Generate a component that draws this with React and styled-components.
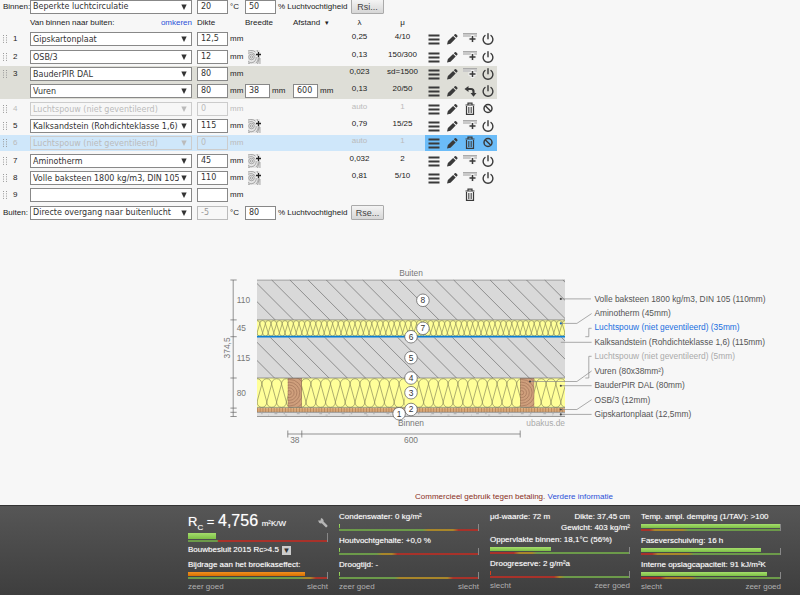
import React, { useState } from 'react';
import styled, { createGlobalStyle } from 'styled-components';

const layers = [
  { id: 1, nr: '1', material: 'Gipskartonplaat', dikte: '12,5', lambda: '0,25', mu: '4/10', actions: ['add', 'power'] },
  { id: 2, nr: '2', material: 'OSB/3', dikte: '12', wood: true, lambda: '0,13', mu: '150/300', actions: ['add', 'power'] },
  { id: 3, nr: '3', material: 'BauderPIR DAL', dikte: '80', lambda: '0,023', mu: 'sd=1500', actions: ['add', 'power'], tone: 'group', joined: true },
  { id: 4, nr: '', material: 'Vuren', dikte: '80', breedte: '38', afstand: '600', lambda: '0,13', mu: '20/50', actions: ['back', 'power'], tone: 'group' },
  { id: 5, nr: '4', material: 'Luchtspouw (niet geventileerd)', dikte: '0', lambda: 'auto', mu: '1', actions: ['trash', 'ban'], off: true },
  { id: 6, nr: '5', material: 'Kalksandstein (Rohdichteklasse 1,6)', dikte: '115', wood: true, lambda: '0,79', mu: '15/25', actions: ['add', 'power'] },
  { id: 7, nr: '6', material: 'Luchtspouw (niet geventileerd)', dikte: '0', lambda: 'auto', mu: '1', actions: ['trash', 'ban'], off: true, tone: 'active' },
  { id: 8, nr: '7', material: 'Aminotherm', dikte: '45', wood: true, lambda: '0,032', mu: '2', actions: ['add', 'power'] },
  { id: 9, nr: '8', material: 'Volle baksteen 1800 kg/m3, DIN 105', dikte: '110', wood: true, lambda: '0,81', mu: '5/10', actions: ['add', 'power'] },
  { id: 10, nr: '9', material: '', dikte: '', lambda: '', mu: '', actions: ['trash'], empty: true },
];

const tones = { group: '#deded7', active: '#cfe7fa' };

const icons = {
  menu: <path d="M1.500 3.500h11M1.500 7.500h11M1.500 11.500h11" stroke="#3a3a3a" strokeWidth="1.800" />,
  edit: (
    <g fill="#3a3a3a">
      <path d="M2 12.500l.9-3.500 5.200-5 2.600 2.600-5.200 5.100z" />
      <path d="M8.800 3.300l1-1q.7-.6 1.300 0l1.200 1.200q.6.700 0 1.300l-1 1z" />
    </g>
  ),
  add: (
    <g>
      <path d="M0 1h14v4H0z" fill="#c9c9c9" />
      <path d="M0 1.500h14" stroke="#aaa" />
      <path d="M9.500 3v8M5.500 7h8" stroke="#f2f2f2" strokeWidth="3.600" />
      <path d="M9.500 4v6M6.500 7h6" stroke="#3a3a3a" strokeWidth="1.500" />
    </g>
  ),
  power: (
    <g fill="none" stroke="#3a3a3a" strokeWidth="1.400" strokeLinecap="round">
      <path d="M4 3.500A4.900 4.900 0 1 0 10 3.500" />
      <path d="M7 1.800v5" />
    </g>
  ),
  back: (
    <g>
      <path d="M4.500 5h3.500q2.500 0 2.500 2.500v2" fill="none" stroke="#3a3a3a" strokeWidth="2.200" />
      <path d="M5.500 2v6L1.500 5zM7.500 9h6l-3 3.800z" fill="#3a3a3a" />
    </g>
  ),
  trash: (
    <g fill="none" stroke="#3a3a3a">
      <path d="M2.500 3h9M5 2.500v-1.300h4v1.300" strokeWidth="1.200" />
      <path d="M3.500 4v8.300h7V4" strokeWidth="1.200" />
      <path d="M5.500 5v6M7 5v6M8.500 5v6" strokeWidth=".7" />
    </g>
  ),
  ban: (
    <g fill="none" stroke="#3a3a3a" strokeWidth="1.500">
      <circle cx="7" cy="6.500" r="4" />
      <path d="M4.200 3.700l5.600 5.600" />
    </g>
  ),
};

const iconLabels = {
  menu: 'Verplaatsen', edit: 'Bewerken', add: 'Laag toevoegen', power: 'Uitschakelen',
  back: 'Terug', trash: 'Verwijderen', ban: 'Inschakelen',
};

function Icon({ name }) {
  return (
    <IconButton type="button" aria-label={iconLabels[name]}>
      <svg width="14" height="14" viewBox="0 0 14 14" aria-hidden="true">{icons[name]}</svg>
    </IconButton>
  );
}

function WoodButton() {
  return (
    <IconButton type="button" aria-label="Hout toevoegen">
      <svg width="14" height="14" viewBox="0 0 14 14" aria-hidden="true">
        <path d="M1 0h12v14H1z" fill="#e6e6e6" />
        <g fill="none" stroke="#8c8c8c" strokeWidth=".7">
          <circle cx="4.500" cy="7" r="1.200" />
          <circle cx="4.500" cy="7" r="2.800" />
          <path d="M1 3.200Q5 1 8 4.500T7 12Q4 14 1 11.500M1 1Q7-1 10 4t-1 9M10 0q3 5 2 9l-1.500 5M13 8v6M1 13l2 1" />
        </g>
        <path d="M8.500 2h5.500v5h-5.500z" fill="#f2f2f2" />
        <path d="M11.500 2v5M9 4.500h5" stroke="#222" strokeWidth="1.300" />
      </svg>
    </IconButton>
  );
}

function Dropdown({ value, label, disabled }) {
  return (
    <SelectWrap $off={disabled}>
      <Select aria-label={label} disabled={disabled} defaultValue={value}>
        <option>{value}</option>
      </Select>
      <svg width="6" height="6" viewBox="0 0 6 6" aria-hidden="true"><path d="M.3.500h5.400L3 6z" fill="currentColor" /></svg>
    </SelectWrap>
  );
}

function Climate({ name, surface, temp, hum, button, locked }) {
  return (
    <ClimateRow>
      <ClimateName>{name}</ClimateName>
      <Dropdown value={surface} label={name} />
      <Thickness>
        <Field aria-label={'Temperatuur ' + name} defaultValue={temp} disabled={locked} /> °C
      </Thickness>
      <Humidity>
        <Field defaultValue={hum} />% Luchtvochtigheid
      </Humidity>
      <SurfaceButton type="button">{button}</SurfaceButton>
    </ClimateRow>
  );
}

function LayerRow({ layer }) {
  const { nr, material, dikte, breedte, afstand, wood, lambda, mu, actions, off, empty, tone, joined } = layer;
  return (
    <Row $tone={tones[tone]} $joined={joined} $off={off}>
      <td>
        {nr && (
          <Handle viewBox="0 0 4 8" width="4" height="8" aria-hidden="true">
            <path d="M.5 0v8M3.500 0v8" stroke="#999" strokeDasharray="1 1.300" />
          </Handle>
        )}
      </td>
      <td>{nr}</td>
      <td><Dropdown value={material} label={'Materiaal ' + nr} disabled={off} /></td>
      <td>
        <Thickness><Field aria-label={'Dikte ' + nr} defaultValue={dikte} disabled={off} /> mm</Thickness>
      </td>
      <td>
        {breedte && <Thickness $small><Field aria-label="Breedte" defaultValue={breedte} /> mm</Thickness>}
        {wood && <WoodButton />}
      </td>
      <td>{afstand && <Thickness $small><Field aria-label="Afstand" defaultValue={afstand} /> mm</Thickness>}</td>
      <ValueCell>{lambda}</ValueCell>
      <ValueCell>{mu}</ValueCell>
      <ActionCell $active={tone === 'active'}>
        <Actions>
          {empty ? <><span /><span /></> : <><Icon name="menu" /><Icon name="edit" /></>}
          {actions.map((name) => <Icon key={name} name={name} />)}
        </Actions>
      </ActionCell>
    </Row>
  );
}

// continuous insulation curve between two heights
const insulation = (x1, x2, top, bottom, period) => {
  const r = period / 2;
  const ry = period * 0.55;
  let d = `M${x1 - period} ${bottom - ry}`;
  for (let x = x1 - period; x < x2 + period; x += period) {
    d += `A${r} ${ry} 0 0 0 ${x + period} ${bottom - ry}L${x + r} ${top + ry}A${r} ${ry} 0 0 1 ${x + r + period} ${top + ry}L${x + period} ${bottom - ry}`;
  }
  return d;
};

const hatch = (start, top, height) => {
  let d = '';
  for (let x = start - 78; x < 490; x += 26) d += `M${x} ${top}l${height} ${height}`;
  return d;
};

const markers = [
  [8, 287, 49], [7, 287, 89], [6, 270, 101], [5, 270, 131],
  [4, 270, 160], [3, 270, 181], [2, 270, 205], [1, 253, 211],
];

const legend = [
  { text: 'Volle baksteen 1800 kg/m3, DIN 105 (110mm)', line: 'M484 47H527', dot: [484, 47] },
  { text: 'Aminotherm (45mm)', line: 'M484 82H507L528 68', dot: [484, 82], dotFill: '#1565c0' },
  { text: 'Luchtspouw (niet geventileerd) (35mm)', line: 'M519 101H524V89H528', fill: '#1a6fe0' },
  { text: 'Kalksandstein (Rohdichteklasse 1,6) (115mm)', line: 'M484 109H528' },
  { text: 'Luchtspouw (niet geventileerd) (5mm)', line: 'M519 160H524V129H528', fill: '#aaa' },
  { text: 'Vuren (80x38mm²)', line: 'M440 165H507L528 150', dot: [440, 165] },
  { text: 'BauderPIR DAL (80mm)', line: 'M484 171H528', dot: [484, 171] },
  { text: 'OSB/3 (12mm)', line: 'M484 205H507L528 191', dot: [484, 205] },
  { text: 'Gipskartonplaat (12,5mm)', line: 'M484 212H528', dot: [484, 212] },
];

function Post({ x }) {
  return (
    <svg x={x} y="160" width="20" height="42" viewBox="0 0 20 42">
      <rect width="20" height="42" fill="#cf9f7c" />
      <g fill="none" stroke="#a3765a">
        {[3, 7, 11, 15, 19, 24].map((r) => <circle key={r} cx="2" cy="21" r={r} />)}
      </g>
      <rect width="20" height="42" fill="none" stroke="#7a5a45" />
    </svg>
  );
}

function CrossSection() {
  return (
    <Drawing viewBox="0 0 800 260" role="img" aria-label="Doorsnede">
      <defs>
        <clipPath id="wall"><rect x="50" y="19" width="440" height="197" /></clipPath>
      </defs>
      <g clipPath="url(#wall)">
        <rect x="50" y="20" width="440" height="141" fill="#d9d9d9" />
        <rect x="50" y="77" width="440" height="24" fill="#ffff99" />
        <rect x="50" y="160" width="440" height="43" fill="#ffff99" />
        <path d={hatch(71, 20, 57) + hatch(69, 102, 58)} stroke="#808080" strokeWidth="1.200" />
        <g fill="none" stroke="#8c8c5c">
          <path d={insulation(50, 490, 78, 100, 8)} />
          <path d={insulation(50, 490, 161, 202, 14)} />
        </g>
        <rect x="261" y="161" width="17" height="41" fill="#ffff99" />
        <Post x="94" />
        <Post x="426" />
        <rect x="50" y="203" width="440" height="6" fill="#d9a878" />
        <path d="M50 206H490" stroke="#b07e50" strokeWidth="6" strokeDasharray="1 3" />
        <rect x="50" y="209" width="440" height="6" fill="#dedede" />
        <path d="M56 211H490" stroke="#999" strokeDasharray="2 17 4 9" />
        <path d="M66 213H490" stroke="#aaa" strokeDasharray="1 23 3 31" />
        <path d="M50 20H490M50 77H490M50 160H490M50 202H490M50 209H490M50 215H490" stroke="#777" />
        <path d="M50 101H490" stroke="#0a7fd4" strokeWidth="2.500" />
      </g>

      <g stroke="#666" fill="none">
        <path d="M16 20V215M12 20h9M12 77h9M12 101h9M12 160h9M12 203h9M12 209h9M12 215h9" />
        <path d="M94 240H426M94 235v10M114 235v10M426 235v10" />
        {legend.map((l) => <path key={l.text} d={l.line} stroke="#888" />)}
      </g>
      {legend.map((l) => l.dot && (
        <circle key={l.text} cx={l.dot[0]} cy={l.dot[1]} r="1.500" fill={l.dotFill || '#444'} />
      ))}

      <g fill="#777">
        <text x="21" y="53">110</text>
        <text x="21" y="93">45</text>
        <text x="21" y="135">115</text>
        <text x="21" y="186">80</text>
        <text x="104" y="253" textAnchor="middle">38</text>
        <text x="270" y="253" textAnchor="middle">600</text>
        <text x="270" y="14" textAnchor="middle">Buiten</text>
        <text x="270" y="229" textAnchor="middle">Binnen</text>
        <text x="490" y="229" textAnchor="end" fill="#aaa">ubakus.de</text>
        <text transform="translate(11 117) rotate(-90)" textAnchor="middle">374,5</text>
      </g>
      {markers.map(([nr, x, y]) => (
        <g key={nr}>
          <circle cx={x} cy={y} r="9" fill="#fff" stroke="#555" />
          <text x={x} y={y + 4} textAnchor="middle" fill="#333">{nr}</text>
        </g>
      ))}
      {legend.map((l, i) => (
        <text key={l.text} x="532" y={Math.round(51 + i * 20.5)} fill={l.fill || '#555'}>{l.text}</text>
      ))}
    </Drawing>
  );
}

const RED = '#a8322a';
const GREEN = '#6c9a4a';
const OCHRE = '#a8862a';
const scale = (a, b, c, d, e) => `linear-gradient(90deg, ${a} ${b}%, ${c} ${b + 4}%, ${c} ${d}%, ${e} ${d + 4}%)`;

function Meter({ label, value, strip, color, tall }) {
  return (
    <div>
      {label && <MeterLabel>{label}</MeterLabel>}
      <Track $tall={tall}>
        <Level $color={color} style={{ width: value + '%' }} />
        <Strip $strip={strip} />
      </Track>
    </div>
  );
}

function App() {
  const [reverse, setReverse] = useState(false);
  const rows = reverse ? [...layers].reverse() : layers;

  return (
    <Page>
      <GlobalStyle />
      <Editor>
        <Climate name="Binnen:" surface="Beperkte luchtcirculatie" temp="20" hum="50" button="Rsi..." />
        <LayerTable>
          <colgroup>
            <col width="13" /><col width="17" /><col width="167" /><col width="48" /><col width="48" />
            <col width="46" /><col width="41" /><col width="45" /><col width="72" />
          </colgroup>
          <thead>
            <tr>
              <th colSpan="2" aria-label="Nummer" />
              <th>
                <HeadLine>
                  Van binnen naar buiten:
                  <Link href="#omkeren" onClick={(e) => { e.preventDefault(); setReverse(!reverse); }}>omkeren</Link>
                </HeadLine>
              </th>
              <th>Dikte</th>
              <th>Breedte</th>
              <th>Afstand &nbsp;<Caret>▾</Caret></th>
              <CenterHead>λ</CenterHead>
              <CenterHead>μ</CenterHead>
              <th aria-label="Acties" />
            </tr>
          </thead>
          <tbody>
            {rows.map((layer) => <LayerRow key={layer.id} layer={layer} />)}
          </tbody>
        </LayerTable>
        <Climate name="Buiten:" surface="Directe overgang naar buitenlucht" temp="-5" hum="80" button="Rse..." locked />
      </Editor>

      <Figure>
        <CrossSection />
      </Figure>

      <Notice>
        Commercieel gebruik tegen betaling. <Link href="#info">Verdere informatie</Link>
      </Notice>

      <Results>
        <Panel>
          <RcLine>
            <span>R<sub>C</sub> = <RcValue>4,756</RcValue> <small>m²K/W</small></span>
            <svg width="11" height="11" viewBox="0 0 22 22" aria-hidden="true">
              <path d="M2 7L7 7L8 2Q12 3 13 6Q13.500 8 13 9L21 17Q21.500 20 18 21L9.500 12.500Q4 14 2 7z" fill="#b5b5b5" />
            </svg>
          </RcLine>
          <Meter value={20} color="green" tall strip={`linear-gradient(90deg, ${GREEN} 21%, ${RED} 22%)`} />
          <NormLine>
            Bouwbesluit 2015 Rc&gt;4.5
            <NormButton type="button" aria-label="Norm kiezen">▼</NormButton>
          </NormLine>
          <Meter label="Bijdrage aan het broeikaseffect:" value={84} color="orange" strip={scale(GREEN, 80, OCHRE, 88, RED)} />
          <Ends><span>zeer goed</span><span>slecht</span></Ends>
        </Panel>
        <Panel>
          <Meter label="Condenswater: 0 kg/m²" value={1} color="green" strip={scale(GREEN, 60, OCHRE, 82, RED)} />
          <Meter label="Houtvochtgehalte: +0,0 %" value={1} color="green" strip={scale(GREEN, 27, OCHRE, 38, RED)} />
          <Meter label="Droogtijd: -" value={1} color="green" strip={scale(GREEN, 40, OCHRE, 78, RED)} />
          <Ends><span>zeer goed</span><span>slecht</span></Ends>
        </Panel>
        <Panel>
          <Facts>
            <span>μd-waarde: 72 m</span>
            <span>Dikte: 37,45 cm<br />Gewicht: 403 kg/m²</span>
          </Facts>
          <Meter label="Oppervlakte binnen: 18,1°C (56%)" value={44} color="green" strip={scale(RED, 17, OCHRE, 30, GREEN)} />
          <Meter label="Droogreserve: 2 g/m²a" value={1} color="red" strip={scale(RED, 46, OCHRE, 50, GREEN)} />
          <Ends><span>slecht</span><span>zeer goed</span></Ends>
        </Panel>
        <Panel>
          <Meter label="Temp. ampl. demping (1/TAV): >100" value={100} color="green" strip={scale(RED, 6, OCHRE, 30, GREEN)} />
          <Meter label="Faseverschuiving: 16 h" value={86} color="green" strip={scale(RED, 8, OCHRE, 34, GREEN)} />
          <Meter label="Interne opslagcapaciteit: 91 kJ/m²K" value={91} color="green" strip={scale(RED, 14, OCHRE, 36, GREEN)} />
          <Ends><span>slecht</span><span>zeer goed</span></Ends>
        </Panel>
      </Results>
    </Page>
  );
}

export default App;

const GlobalStyle = createGlobalStyle`
    * {
        box-sizing: border-box;
    }
    body {
        margin: 0;
        background: #f7f7f7;
        color: #222;
        font: 8px/12px "Liberation Sans", Arial, sans-serif;
    }
    button, input, select {
        margin: 0;
        font: inherit;
        color: inherit;
    }
`;

const Page = styled.div`
    display: flex;
    flex-direction: column;
    min-height: 100vh;
    overflow: hidden;
`;

const Editor = styled.main`
    margin-top: -1px;
`;

const ClimateRow = styled.div`
    display: flex;
    align-items: center;
    height: 15px;
    white-space: nowrap;
`;

const ClimateName = styled.span`
    width: 30px;
    padding-left: 3px;
`;

const SelectWrap = styled.span`
    position: relative;
    display: block;
    width: 162px;
    margin-right: 5px;
    color: ${props => props.$off ? '#bbb' : '#333'};

    svg {
        position: absolute;
        top: 4px;
        right: 5px;
        pointer-events: none;
    }
`;

const Select = styled.select`
    display: block;
    width: 100%;
    height: 14px;
    padding: 0 12px 0 2px;
    border: 1px solid ${props => props.disabled ? '#ccc' : '#888'};
    border-radius: 0;
    appearance: none;
    background: ${props => props.disabled ? 'transparent' : '#fff'};
    font-family: "DejaVu Sans", sans-serif;
    opacity: 1;
`;

const Field = styled.input`
    width: 31px;
    height: 14px;
    margin-right: 2px;
    padding: 0 3px;
    border: 1px solid ${props => props.disabled ? '#bbb' : '#888'};
    border-radius: 0;
    background: ${props => props.disabled ? 'transparent' : '#fff'};
    color: ${props => props.disabled ? '#999' : '#333'};
    font-family: "DejaVu Sans", sans-serif;
`;

const Thickness = styled.label`
    display: flex;
    align-items: center;
    width: 48px;

    ${Field} {
        width: ${props => props.$small ? '25px' : '31px'};
    }
`;

const Humidity = styled.label`
    display: flex;
    align-items: center;
    width: 106px;
`;

const SurfaceButton = styled.button`
    width: 33px;
    height: 15px;
    padding: 0;
    border: 1px solid #aaa;
    border-radius: 1px;
    background: linear-gradient(#f4f4f4, #d6d6d6);
    color: #444;
    font-size: 9px;
    line-height: 12px;
`;

const LayerTable = styled.table`
    width: 497px;
    table-layout: fixed;
    border-spacing: 0;
    white-space: nowrap;

    th {
        height: 17px;
        padding: 0;
        font-weight: normal;
        text-align: left;
    }
`;

const HeadLine = styled.div`
    display: flex;
    justify-content: space-between;
    padding-right: 5px;
`;

const CenterHead = styled.th`
    && {
        text-align: center;
    }
`;

const Caret = styled.span`
    font-size: 7px;
`;

const Link = styled.a`
    color: #2a50d8;
    text-decoration: none;
`;

const Row = styled.tr`
    height: 17px;
    color: ${props => props.$off ? '#bbb' : 'inherit'};

    &:nth-child(3n + 1) {
        height: 18px;
    }

    ${Field}:disabled {
        border-color: #ccc;
        color: #bbb;
    }

    td {
        padding: 1px 0 0;
        border-bottom: 2px solid transparent;
        background: ${props => props.$tone || 'transparent'};
        background-clip: ${props => props.$joined ? 'border-box' : 'padding-box'};
        vertical-align: top;
        line-height: 14px;
    }
`;

const ValueCell = styled.td`
    && {
        padding: 0;
        line-height: 12px;
        text-align: center;
    }
`;

const ActionCell = styled.td`
    && {
        background-color: ${props => props.$active ? '#6bbcf8' : ''};
    }
`;

const Actions = styled.div`
    display: grid;
    grid-template-columns: repeat(4, 18px);
    justify-items: center;
`;

const Handle = styled.svg`
    display: block;
    margin: 3px 0 0 3px;
`;

const IconButton = styled.button`
    display: block;
    height: 14px;
    padding: 0 2px;
    border: 0;
    background: none;
    cursor: pointer;

    svg {
        display: block;
    }
`;

const Figure = styled.figure`
    margin: 46px 0 0;
    padding: 0 18px 0 222px;
`;

const Drawing = styled.svg`
    display: block;
    width: 100%;
    max-width: 560px;
    font-size: 12px;
`;

const Notice = styled.p`
    margin: auto 0 2px;
    padding-left: 415px;
    color: #8a2f1c;
`;

const Results = styled.footer`
    display: grid;
    grid-template-columns: repeat(4, 1fr);
    gap: 11px;
    height: 90px;
    padding: 5px 19px 0 188px;
    border-top: 1px solid #333;
    background: linear-gradient(#565656, #3e3e3e);
    color: #fff;
    line-height: 12px;
    text-shadow: 0 0 1px rgba(255, 255, 255, 0.5);
    white-space: nowrap;
`;

const Panel = styled.section`
    display: flex;
    flex-direction: column;
`;

const MeterLabel = styled.div`
    height: 13px;
`;

const Track = styled.div`
    display: flex;
    flex-direction: column;
    justify-content: space-between;
    height: ${props => props.$tall ? '9px' : '7px'};
    margin-bottom: ${props => props.$tall ? '2px' : '4px'};
    border-right: 1px solid #888;
`;

const fills = {
  green: 'linear-gradient(#a5dd6c, #7cbf45)',
  orange: 'linear-gradient(#f09020, #d87000)',
  red: '#d8401c',
};

const Level = styled.div`
    flex: 1;
    margin-bottom: 1px;
    background: ${props => fills[props.$color]};
`;

const Strip = styled.div`
    height: 2px;
    background: ${props => props.$strip};
`;

const RcLine = styled.div`
    display: flex;
    justify-content: space-between;
    align-items: center;
    height: 22px;
    font-size: 13px;
    line-height: 20px;

    sub {
        font-size: 8px;
        line-height: 8px;
    }

    small {
        font-size: 8px;
    }
`;

const RcValue = styled.span`
    font-size: 16px;
`;

const NormLine = styled.div`
    display: flex;
    align-items: center;
    gap: 3px;
    height: 12px;
    margin-bottom: 3px;
`;

const NormButton = styled.button`
    width: 9px;
    height: 9px;
    padding: 0;
    border: 0;
    background: #ccc;
    color: #333;
    line-height: 9px;
    text-shadow: none;
`;

const Facts = styled.div`
    display: flex;
    justify-content: space-between;
    height: 23px;
    line-height: 11px;
    text-align: right;
`;

const Ends = styled.div`
    display: flex;
    justify-content: space-between;
    margin-top: -2px;
    color: #b0b0b0;
    text-shadow: none;
`;
